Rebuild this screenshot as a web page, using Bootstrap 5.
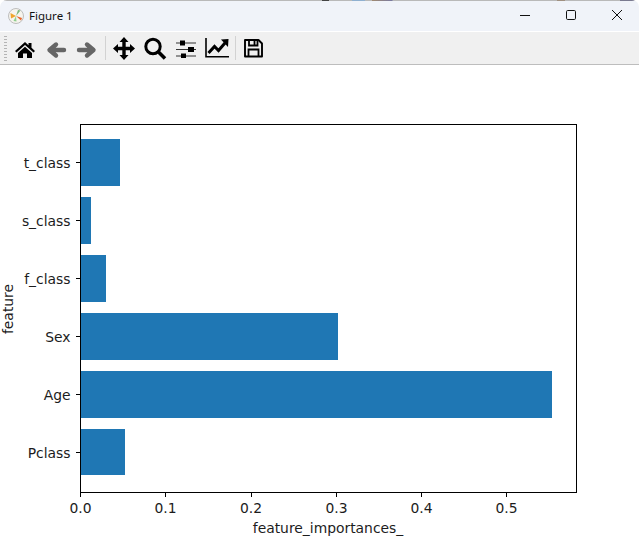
<!DOCTYPE html>
<html lang="en">
<head>
<meta charset="utf-8">
<title>Figure 1</title>
<link href="https://cdn.jsdelivr.net/npm/bootstrap@5.3.0/dist/css/bootstrap.min.css" rel="stylesheet">
<style>
html,body{margin:0;height:100%;background:#fff;overflow:hidden}
.app-window{width:639px;height:543px;background:#fff;overflow:hidden;border-top-left-radius:7px;border-top-right-radius:7px}
.top-edge{height:1px;flex:none;background:linear-gradient(90deg,#b9b9b9 0,#b9b9b9 322px,#444 322px,#444 329px,#b9b9b9 329px,#b9b9b9 352px,#8fb0d0 352px,#8fb0d0 365px,#b9b9b9 365px,#b9b9b9 372px,#a08a70 372px,#7a7aa0 392px,#b9b9b9 393px,#b9b9b9 557px,#a09080 557px,#a09080 565px,#b9b9b9 565px,#b9b9b9 620px,#7a7a90 620px,#7a7a90 634px,#b9b9b9 634px)}
.title-strip{height:30px;flex:none;background:#f0f3f9}
.title-logo{width:16px;height:16px;margin:0 5px 1px 8px;flex:none}
.title-text{font:11.5px "Noto Sans","Open Sans",sans-serif;color:#111;margin-bottom:2px}
.win-btn{width:46px;height:30px;flex:none;display:flex;align-items:center;justify-content:center;padding:0 0 2px 2px}
.tool-strip{height:34px;flex:none;background:#f0f0f0;border-top:1px solid #fff;border-bottom:1px solid #bdbdbd}
.grip{width:3px;height:26px;margin:0 6px 0 4px;flex:none;background-image:radial-gradient(circle,#b4b4b4 45%,transparent 50%);background-size:2px 3px}
.tool-ico{width:24px;height:24px;flex:none;margin-right:7px;display:block}
.tool-sep{width:1px;height:24px;background:#d2d2d2;margin:0 6px 0 -1px;flex:none}
.plot-area{display:block;flex:none}
.plot-area text{font-family:"DejaVu Sans",sans-serif;font-size:13.89px;fill:#1c1c1c}
</style>
</head>
<body>
<div class="app-window d-flex flex-column">
  <div class="top-edge"></div>
  <div class="title-strip d-flex align-items-center">
    <svg class="title-logo" viewBox="0 0 16 16"><circle cx="8" cy="8" r="7.500" fill="#f6f4ee" stroke="#bdbdbd"/><path d="M8 8 2.500 5 3 10.500Z" fill="#f0a52c"/><path d="M8 8 12.500 2.500 10 2Z" fill="#7ab87a"/><path d="M8 8 13 12.500 14 10Z" fill="#e8662c"/><path d="M8 8 5.500 13 8.500 13.500Z" fill="#8fce8f"/></svg>
    <span class="title-text flex-grow-1">Figure 1</span>
    <div class="win-btn"><svg width="12" height="12" viewBox="0 0 12 12"><path d="M1 6.500H11" stroke="#111" fill="none"/></svg></div>
    <div class="win-btn"><svg width="12" height="12" viewBox="0 0 12 12"><rect x="1.500" y="1.500" width="9" height="9" rx="1.200" stroke="#111" fill="none"/></svg></div>
    <div class="win-btn"><svg width="12" height="12" viewBox="0 0 12 12"><path d="M1 1 11 11M11 1 1 11" stroke="#111" fill="none"/></svg></div>
  </div>
  <div class="tool-strip d-flex align-items-center">
    <div class="grip"></div>
    <svg class="tool-ico" viewBox="0 0 24 24"><path d="M12 6 2 15 3.500 16.500 12 9 20.500 16.500 22 15 18.500 11.800V7H15.500V9.200Z" fill="#000"/><path d="M5 17 12 10.800 19 17V22H14V17.500H10V22H5Z" fill="#000"/></svg>
    <svg class="tool-ico" viewBox="0 0 24 24"><path d="M20 14H6M12 8.500 5.500 14 12 19.500" fill="none" stroke="#666" stroke-width="4.400" stroke-linecap="round" stroke-linejoin="round"/></svg>
    <svg class="tool-ico" viewBox="0 0 24 24"><path d="M4 14H18M12 8.500 18.500 14 12 19.500" fill="none" stroke="#666" stroke-width="4.400" stroke-linecap="round" stroke-linejoin="round"/></svg>
    <div class="tool-sep"></div>
    <svg class="tool-ico" viewBox="0 0 24 24"><path d="M12 1 16.500 6H13.700V10.800H18V8L23 12.500 18 17V14.200H13.700V19H16.500L12 24 7.500 19H10.300V14.200H6V17L1 12.500 6 8V10.800H10.300V6H7.500Z" fill="#000"/></svg>
    <svg class="tool-ico" viewBox="0 0 24 24"><circle cx="10" cy="10.500" r="7.200" fill="none" stroke="#000" stroke-width="3"/><path d="M15 15.500 22 22.500" stroke="#000" stroke-width="3.500" fill="none"/></svg>
    <svg class="tool-ico" viewBox="0 0 24 24"><path d="M2 7H22M2 13.500H22M2 20H22" stroke="#333" stroke-width="1.200" fill="none"/><path d="M6 4.500H11V9.500H6ZM14 11H20V16H14ZM7 17.500H12V22H7Z" fill="#000"/></svg>
    <svg class="tool-ico" viewBox="0 0 24 24"><path d="M1 2V20.800H24" stroke="#000" stroke-width="1.600" fill="none"/><path d="M3.500 17 9.500 10.500 13.500 14.500 20 7" stroke="#000" stroke-width="3" fill="none"/><path d="M16 3.500 23.500 3 23 11Z" fill="#000"/></svg>
    <div class="tool-sep"></div>
    <svg class="tool-ico" viewBox="0 0 24 24"><path d="M3 4H16.500L20 7.500V20.500H3Z" fill="none" stroke="#000" stroke-width="1.900" stroke-linejoin="round"/><path d="M7 4V9.500H15.500V4M12.500 5V8.500M6.500 20V13.500H16.500V20" fill="none" stroke="#000" stroke-width="1.800"/></svg>
  </div>
  <svg class="plot-area" width="639" height="478" viewBox="0 65 639 478">
    <g fill="#1f77b4">
      <rect x="81" y="139" width="39" height="47"/>
      <rect x="81" y="197" width="10" height="47"/>
      <rect x="81" y="255" width="25" height="47"/>
      <rect x="81" y="313" width="257" height="47"/>
      <rect x="81" y="371" width="471" height="47"/>
      <rect x="81" y="429" width="44" height="46"/>
    </g>
    <rect x="80.500" y="124.500" width="496" height="368" fill="none" stroke="#000"/>
    <path stroke="#000" fill="none" d="M76 162.500H80M76 220.500H80M76 278.500H80M76 336.500H80M76 394.500H80M76 452.500H80M80.500 493V497M165.500 493V497M251.500 493V497M336.500 493V497M421.500 493V497M506.500 493V497"/>
    <g text-anchor="end">
      <text x="70.500" y="168">t_class</text>
      <text x="70.500" y="226">s_class</text>
      <text x="70.500" y="284">f_class</text>
      <text x="70.500" y="342">Sex</text>
      <text x="70.500" y="400">Age</text>
      <text x="70.500" y="458">Pclass</text>
    </g>
    <g text-anchor="middle">
      <text x="80.500" y="513">0.0</text>
      <text x="165.500" y="513">0.1</text>
      <text x="251" y="513">0.2</text>
      <text x="336.500" y="513">0.3</text>
      <text x="421.500" y="513">0.4</text>
      <text x="506.500" y="513">0.5</text>
      <text x="328" y="533">feature_importances_</text>
      <text transform="translate(13 309) rotate(-90)">feature</text>
    </g>
  </svg>
</div>
<script src="https://cdn.jsdelivr.net/npm/bootstrap@5.3.0/dist/js/bootstrap.bundle.min.js"></script>
</body>
</html>
